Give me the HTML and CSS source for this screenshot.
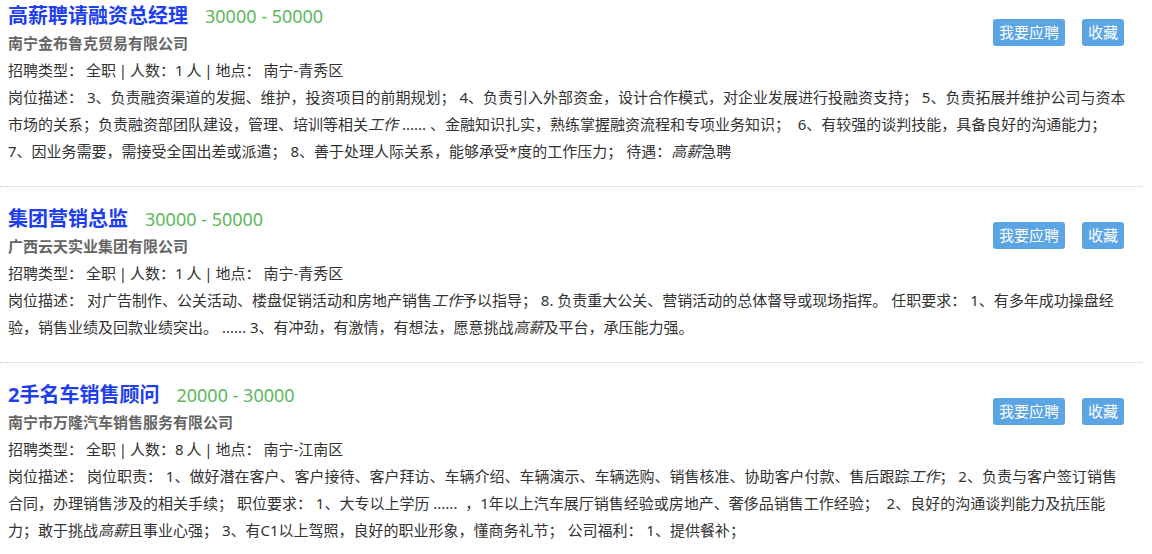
FILE: index.html
```html
<!DOCTYPE html>
<html lang="zh-CN">
<head>
<meta charset="UTF-8">
<title>职位列表</title>
<link rel="stylesheet" href="styles.css">
</head>
<body>

<div class="job-list">
  <div class="job-item">
    <div class="job-actions">
      <button class="btn">我要应聘</button>
      <button class="btn">收藏</button>
    </div>
    <div class="job-title"><a href="#">高薪聘请融资总经理</a><span class="salary">30000 - 50000</span></div>
    <div class="company">南宁金布鲁克贸易有限公司</div>
    <div class="info">招聘类型： 全职 | 人数：1 人 | 地点： 南宁-青秀区</div>
    <div class="desc">岗位描述： 3、负责融资渠道的发掘、维护，投资项目的前期规划； 4、负责引入外部资金，设计合作模式，对企业发展进行投融资支持； 5、负责拓展并维护公司与资本市场的关系；负责融资部团队建设，管理、培训等相关<em>工作</em> ...... 、金融知识扎实，熟练掌握融资流程和专项业务知识； &nbsp;6、有较强的谈判技能，具备良好的沟通能力； 7、因业务需要，需接受全国出差或派遣； 8、善于处理人际关系，能够承受*度的工作压力； 待遇：<em>高薪</em>急聘</div>
  </div>

  <div class="job-item">
    <div class="job-actions">
      <button class="btn">我要应聘</button>
      <button class="btn">收藏</button>
    </div>
    <div class="job-title"><a href="#">集团营销总监</a><span class="salary">30000 - 50000</span></div>
    <div class="company">广西云天实业集团有限公司</div>
    <div class="info">招聘类型： 全职 | 人数：1 人 | 地点： 南宁-青秀区</div>
    <div class="desc">岗位描述： 对广告制作、公关活动、楼盘促销活动和房地产销售<em>工作</em>予以指导； 8. 负责重大公关、营销活动的总体督导或现场指挥。 任职要求： 1、有多年成功操盘经验，销售业绩及回款业绩突出。 ...... 3、有冲劲，有激情，有想法，愿意挑战<em>高薪</em>及平台，承压能力强。</div>
  </div>

  <div class="job-item">
    <div class="job-actions">
      <button class="btn">我要应聘</button>
      <button class="btn">收藏</button>
    </div>
    <div class="job-title"><a href="#">2手名车销售顾问</a><span class="salary">20000 - 30000</span></div>
    <div class="company">南宁市万隆汽车销售服务有限公司</div>
    <div class="info">招聘类型： 全职 | 人数：8 人 | 地点： 南宁-江南区</div>
    <div class="desc">岗位描述： 岗位职责： 1、做好潜在客户、客户接待、客户拜访、车辆介绍、车辆演示、车辆选购、销售核准、协助客户付款、售后跟踪<em>工作</em>； 2、负责与客户签订销售合同，办理销售涉及的相关手续； 职位要求： 1、大专以上学历 ...... &nbsp;，1年以上汽车展厅销售经验或房地产、奢侈品销售工作经验； &nbsp;2、良好的沟通谈判能力及抗压能力；敢于挑战<em>高薪</em>且事业心强； 3、有C1以上驾照，良好的职业形象，懂商务礼节； 公司福利： 1、提供餐补；</div>
  </div>
</div>

</body>
</html>
```

FILE: styles.css
```css
body {
  margin: 0;
  font-family: "Microsoft YaHei", "Noto Sans", "Noto Sans CJK SC", sans-serif;
  font-size: 15px;
  color: #333;
  background: #fff;
}
.job-list {
  width: 1142px;
}
.job-item {
  padding: 18px 13px 21px 8px;
  border-bottom: 1px dotted #c8c8c8;
}
.job-item:first-child {
  padding-top: 2px;
}
.job-actions {
  float: right;
  display: flex;
  gap: 17px;
  margin-top: 17px;
  margin-right: 5px;
}
.btn {
  height: 27px;
  padding: 0 6px;
  border: none;
  border-radius: 3px;
  background-color: #5ca5e5;
  color: #fff;
  font-family: inherit;
  font-size: 15px;
  line-height: 27px;
  cursor: pointer;
}
.job-title {
  height: 28px;
  line-height: 28px;
  overflow: hidden;
}
.job-title a {
  font-size: 20px;
  font-weight: bold;
  color: #1e3ff0;
  text-decoration: none;
}
.salary {
  margin-left: 17px;
  font-size: 18px;
  color: #5cb85c;
}
.company {
  font-weight: bold;
  color: #666;
  line-height: 27px;
}
.info {
  line-height: 27px;
  word-spacing: -1px;
}
.desc {
  line-height: 27px;
}
.desc em {
  font-style: italic;
}
```
